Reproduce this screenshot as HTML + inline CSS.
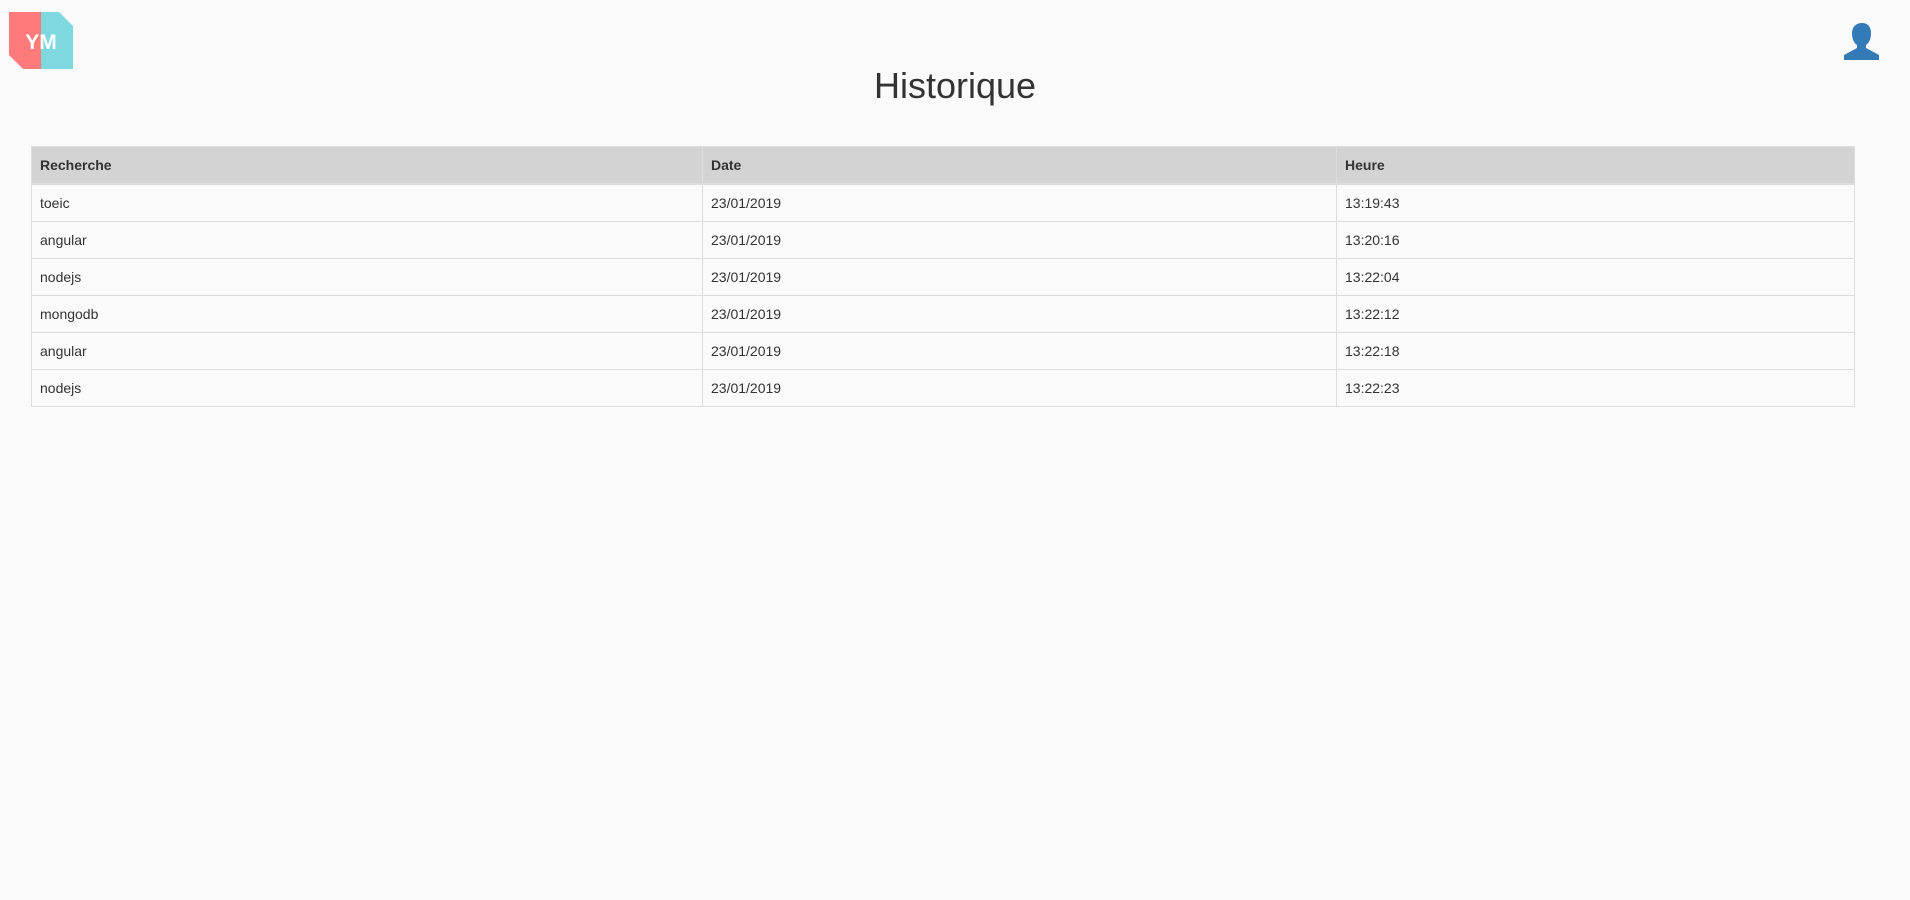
<!DOCTYPE html>
<html><head><meta charset="utf-8"><style>
body{margin:0;background:#fafafa;font-family:"Liberation Sans",Arial,sans-serif;color:#333;width:1910px;height:900px;position:relative;overflow:hidden}
.logo{position:absolute;left:9px;top:12px}
.user{position:absolute;left:1843px;top:23px}
h1{position:absolute;top:65px;left:0;width:1910px;text-align:center;margin:0;font-weight:400;font-size:36px;color:#333}
table{position:absolute;left:31px;top:146px;width:1824px;border-collapse:collapse;font-size:14px}
th,td{border:1px solid #ddd;text-align:left;padding:0 8px;height:36px}
th{background:#d3d3d3;font-weight:700;border-bottom:2px solid #ddd;height:36px}
td:nth-child(1),th:nth-child(1){width:654px}
td:nth-child(2),th:nth-child(2){width:617px}
</style></head><body>
<svg class="logo" width="64" height="57" viewBox="0 0 64 57">
<polygon points="0,0 32,0 32,57 14,57 0,43" fill="#ff7b7b"/>
<polygon points="32,0 50,0 64,14 64,57 32,57" fill="#7fd8e0"/>
<text x="32" y="37" text-anchor="middle" font-family="Liberation Sans,sans-serif" font-weight="bold" font-size="21" fill="#fff">YM</text>
</svg>
<svg class="user" width="38" height="37" viewBox="0 0 38 37">
<path d="M19 0c6 0 9 4 9 10s-2 10-5 12v3l13 7v5H1v-5l13-7v-3c-3-2-5-6-5-12S13 0 19 0z" fill="#337ab7"/>
</svg>
<h1>Historique</h1>
<table>
<tr><th>Recherche</th><th>Date</th><th>Heure</th></tr>
<tr><td>toeic</td><td>23/01/2019</td><td>13:19:43</td></tr>
<tr><td>angular</td><td>23/01/2019</td><td>13:20:16</td></tr>
<tr><td>nodejs</td><td>23/01/2019</td><td>13:22:04</td></tr>
<tr><td>mongodb</td><td>23/01/2019</td><td>13:22:12</td></tr>
<tr><td>angular</td><td>23/01/2019</td><td>13:22:18</td></tr>
<tr><td>nodejs</td><td>23/01/2019</td><td>13:22:23</td></tr>
</table>
</body></html>
